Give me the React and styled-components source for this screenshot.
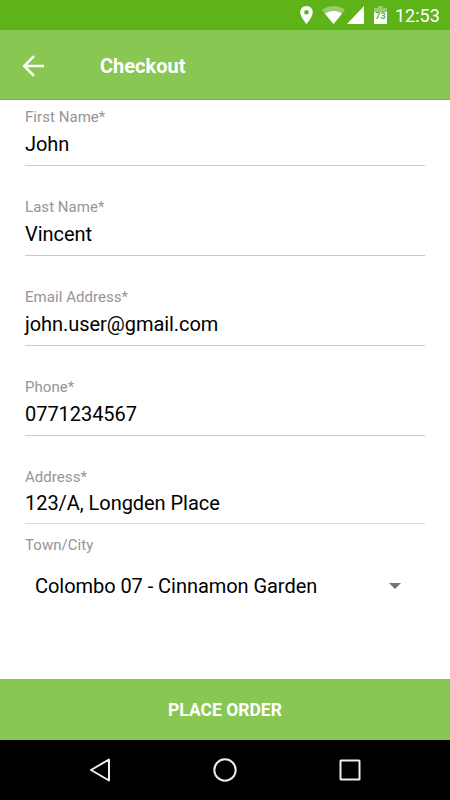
import React, { Component } from 'react';
import styled, { createGlobalStyle } from 'styled-components';

const GlobalStyle = createGlobalStyle`
  * {
    box-sizing: border-box;
  }
  body {
    margin: 0;
    font-family: Roboto, sans-serif;
    background: #ffffff;
  }
`;

const Screen = styled.div`
  display: flex;
  flex-direction: column;
  width: 100%;
  height: 100vh;
  overflow: hidden;
`;

const StatusBar = styled.div`
  flex: none;
  display: flex;
  align-items: center;
  justify-content: flex-end;
  height: 30px;
  padding-right: 10px;
  background: #5eb319;
  svg {
    display: block;
    flex: none;
  }
`;

const StatusIcon = styled.svg`
  margin-right: ${props => props.$gap}px;
`;

const Clock = styled.span`
  width: 45px;
  font-size: 18px;
  font-weight: 400;
  line-height: 30px;
  padding-top: 1px;
  color: #ffffff;
  white-space: nowrap;
`;

const Header = styled.header`
  flex: none;
  display: flex;
  align-items: center;
  height: 70px;
  padding: 2px 22px 0;
  background: #87c752;
  border-bottom: 1px solid #72bf14;
`;

const BackButton = styled.button`
  display: flex;
  width: 78px;
  padding: 0;
  border: 0;
  background: none;
`;

const Title = styled.h1`
  margin: 0;
  font-size: 20px;
  font-weight: 700;
  line-height: 24px;
  color: #ffffff;
`;

const Form = styled.main`
  flex: 1;
  padding: 8px 25px 0;
`;

const Field = styled.div`
  display: flex;
  flex-direction: column;
  gap: ${props => (props.$multiline ? 5 : 6)}px;
  height: ${props => (props.$multiline ? 56 : 58)}px;
  margin-bottom: ${props => (props.$multiline ? 12 : 32)}px;
  border-bottom: 1px solid ${props => (props.$multiline ? '#dadada' : '#cbcbcb')};
`;

const Label = styled.div`
  font-size: 15px;
  line-height: 18px;
  letter-spacing: 0.05px;
  color: #959595;
`;

const Value = styled.div`
  font-size: 20px;
  line-height: 24px;
  letter-spacing: -0.05px;
  color: #000000;
`;

const Select = styled.div`
  display: flex;
  align-items: center;
  justify-content: space-between;
  padding: 20px 24px 0 10px;
`;

const OrderButton = styled.button`
  flex: none;
  height: 61px;
  padding: 0;
  border: 0;
  background: #87c752;
  font-family: inherit;
  font-size: 17.5px;
  font-weight: 700;
  color: #ffffff;
  text-transform: uppercase;
`;

const NavBar = styled.nav`
  flex: none;
  display: flex;
  align-items: center;
  justify-content: center;
  gap: 101px;
  height: 60px;
  background: #000000;
`;

const fields = [
  { label: 'First Name*', value: 'John' },
  { label: 'Last Name*', value: 'Vincent' },
  { label: 'Email Address*', value: 'john.user@gmail.com' },
  { label: 'Phone*', value: '0771234567' },
  { label: 'Address*', value: '123/A, Longden Place', multiline: true }
];

const LocationIcon = () => (
  <StatusIcon $gap={9} width="13" height="18" viewBox="0 0 13 18">
    <path
      fill="#fff"
      fillRule="evenodd"
      d="M6.5 0C2.900 0 .2 2.800.2 6.200.2 10.800 6.500 18 6.500 18s6.300-7.200 6.300-11.800C12.800 2.800 10.100 0 6.500 0zm0 4a2.300 2.300 0 1 1 0 4.600 2.300 2.300 0 0 1 0-4.600z"
    />
  </StatusIcon>
);

const WifiIcon = () => (
  <StatusIcon $gap={2} width="23" height="18" viewBox="0 0 23 18">
    <path fill="#fff" fillOpacity=".35" d="M0 4C3.200 1.400 7.200 0 11.500 0S19.800 1.400 23 4L11.500 18z" />
    <path fill="#fff" d="M3 7.700C5.400 5.900 8.300 5 11.500 5S17.600 5.900 20 7.700L11.500 18z" />
  </StatusIcon>
);

const SignalIcon = () => (
  <StatusIcon $gap={10} width="17" height="18" viewBox="0 0 17 18">
    <path fill="#fff" d="M17 0v18H0z" />
  </StatusIcon>
);

const BatteryIcon = () => (
  <StatusIcon $gap={8} width="13" height="18" viewBox="0 0 13 18">
    <path fill="#fff" fillOpacity=".35" d="M4 0h5v2h4v4H0V2h4z" />
    <path fill="#fff" d="M0 6h13v12H0z" />
    <text x="6.5" y="12.500" fill="#5eb319" fontSize="9" fontWeight="700" textAnchor="middle">73</text>
  </StatusIcon>
);

class CheckoutScreen extends Component {
  render() {
    return (
      <Screen>
        <StatusBar>
          <LocationIcon />
          <WifiIcon />
          <SignalIcon />
          <BatteryIcon />
          <Clock>12:53</Clock>
        </StatusBar>
        <Header>
          <BackButton>
            <svg width="23" height="22" viewBox="0 0 23 22">
              <path d="M22 11H2.500M12 1.200L2.200 11l9.800 9.800" fill="none" stroke="#fff" strokeWidth="2.500" />
            </svg>
          </BackButton>
          <Title>Checkout</Title>
        </Header>
        <Form>
          {fields.map(field => (
            <Field key={field.label} $multiline={field.multiline}>
              <Label>{field.label}</Label>
              <Value>{field.value}</Value>
            </Field>
          ))}
          <Label>Town/City</Label>
          <Select>
            <Value>Colombo 07 - Cinnamon Garden</Value>
            <svg width="12" height="6" viewBox="0 0 12 6">
              <path fill="#737373" d="M0 0h12L6 6z" />
            </svg>
          </Select>
        </Form>
        <OrderButton>Place Order</OrderButton>
        <NavBar>
          <svg width="24" height="24" viewBox="0 0 24 24">
            <path d="M21 1.500v21L3 12z" fill="none" stroke="#eee" strokeWidth="2" strokeLinejoin="round" />
          </svg>
          <svg width="24" height="24" viewBox="0 0 24 24">
            <circle cx="12" cy="12" r="10.700" fill="none" stroke="#eee" strokeWidth="2" />
          </svg>
          <svg width="24" height="24" viewBox="0 0 24 24">
            <rect x="2.500" y="2.500" width="19" height="19" rx=".5" fill="none" stroke="#eee" strokeWidth="2" />
          </svg>
        </NavBar>
      </Screen>
    );
  }
}

const App = () => (
  <>
    <GlobalStyle />
    <CheckoutScreen />
  </>
);

export default App;
